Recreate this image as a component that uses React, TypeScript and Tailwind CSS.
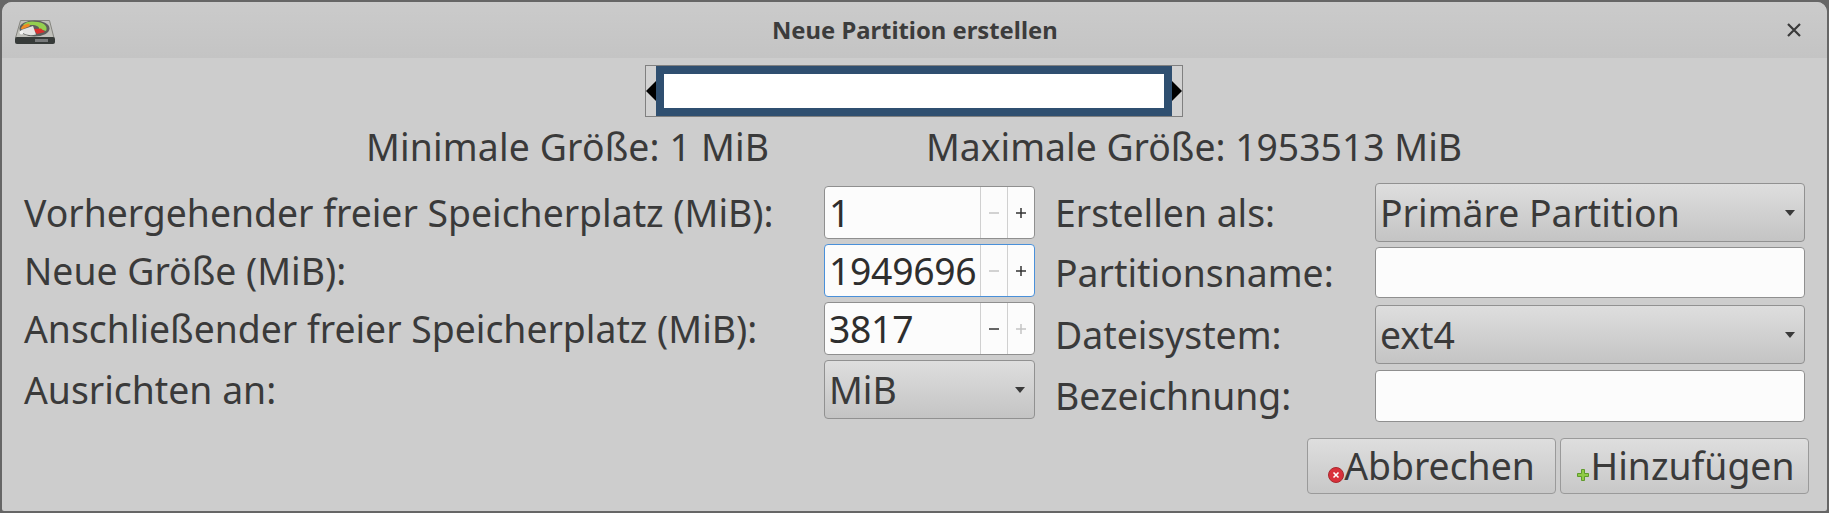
import React from "react";

const font = { fontFamily: '"Noto Sans", sans-serif' };

function Arrow() {
  return (
    <svg width="10" height="6" viewBox="0 0 10 6" className="shrink-0">
      <path d="M0 0H10L5 6Z" fill="#3a3a3a" />
    </svg>
  );
}

function Spin({ value, focus, minusDim, plusDim }: { value: string; focus?: boolean; minusDim?: boolean; plusDim?: boolean }) {
  return (
    <div className={`flex h-[53px] w-[211px] rounded-[4px] border bg-[#fcfcfc] ${focus ? "border-[#4a90d9]" : "border-[#8f8f8f]"}`}>
      <div className="flex-1 overflow-hidden pl-[4px] leading-[51px] tracking-[-0.3px] text-[#2e2e2e]">{value}</div>
      <div className="flex w-[27px] items-center justify-center border-l border-[#d0d0d0]">
        <svg width="10" height="10" viewBox="0 0 10 10"><path d="M0 5H10" stroke={minusDim ? "#c4c4c4" : "#333"} strokeWidth="1.5" /></svg>
      </div>
      <div className="flex w-[27px] items-center justify-center border-l border-[#d0d0d0]">
        <svg width="10" height="10" viewBox="0 0 10 10"><path d="M0 5H10M5 0V10" stroke={plusDim ? "#c4c4c4" : "#333"} strokeWidth="1.5" /></svg>
      </div>
    </div>
  );
}

function Combo({ value, className }: { value: string; className: string }) {
  return (
    <div className={`flex items-center justify-between rounded-[4px] border border-[#919191] bg-gradient-to-b from-[#dedede] to-[#c4c4c4] pl-[4px] pr-[9px] text-[#3a3a3a] ${className}`}>
      <span>{value}</span>
      <Arrow />
    </div>
  );
}

function Entry({ className }: { className: string }) {
  return <div className={`rounded-[4px] border border-[#8f8f8f] bg-[#fcfcfc] ${className}`} />;
}

function DiskIcon() {
  return (
    <svg width="42" height="30" viewBox="0 0 42 30" className="mt-[3px] shrink-0">
      <path d="M6.5 3.5H35.5L40 21H1.5Z" fill="#c0c0ba" stroke="#85857f" strokeWidth="1" />
      <rect x="1" y="20" width="40" height="7" rx="2" fill="#373b39" />
      <rect x="21" y="22" width="13" height="3" fill="#77797a" />
      <ellipse cx="20.5" cy="11.5" rx="15" ry="8" fill="#5d5f5c" />
      <path d="M9 8C12 4 18 4 24 5C31 6 34 10 32 14L25 12C26 10 22 8 18 8C14 8 13 9 12 10Z" fill="#94cf4f" />
      <path d="M7 12C7 9 11 7 15 6.5L16 9L9 12Z" fill="#f08a24" />
      <path d="M19 12L27 11.5L31 15L23 17Z" fill="#d9312e" />
      <path d="M7 13L19 9L22 17.5C16 19 9 18 7 13Z" fill="#e4e4e2" />
      <circle cx="7.5" cy="15.5" r="2" fill="#f2f2f0" />
    </svg>
  );
}

function CancelIcon() {
  return (
    <svg width="16" height="16" viewBox="0 0 16 16" className="block">
      <circle cx="8" cy="8" r="7.5" fill="#d9303b" stroke="#a82a2f" strokeWidth="1" />
      <path d="M5.5 5.5L10.5 10.5M10.5 5.5L5.5 10.5" stroke="#fff" strokeWidth="1.6" />
    </svg>
  );
}

function AddIcon() {
  return (
    <svg width="16" height="12" viewBox="-2 0 16 12" className="block">
      <path d="M4.5 .5H7.5V4.5H11.5V7.5H7.5V11.5H4.5V7.5H.5V4.5H4.5Z" fill="#8fcb45" stroke="#5f9a2c" strokeWidth="1" />
    </svg>
  );
}

function Btn({ icon, label }: { icon: React.ReactNode; label: string }) {
  return (
    <div className="flex h-[56px] w-[249px] items-center justify-center rounded-[4px] border border-[#9a9a9a] bg-gradient-to-b from-[#dedede] to-[#c8c8c8] text-[#3a3a3a]">
      <span className="mt-[18px] shrink-0">{icon}</span>
      <span>{label}</span>
    </div>
  );
}

export default function App() {
  return (
    <div className="h-[513px] w-[1829px] overflow-hidden bg-[#666]" style={font}>
      <div className="flex h-full flex-col overflow-hidden rounded-t-[12px] rounded-b-[4px] border-2 border-[#666] bg-[#cdcdcd] text-[37.33px] leading-[46px] text-[#3a3a3a]">
        <div className="flex h-[56px] shrink-0 items-center bg-gradient-to-b from-[#cbcbcb] to-[#c4c4c4] pl-[12px] pr-[26px]">
          <DiskIcon />
          <span className="ml-[716px] text-[23.8px] font-bold text-[#3c3c3c]">Neue Partition erstellen</span>
          <svg width="14" height="14" viewBox="0 0 14 14" className="ml-auto"><path d="M1 1L13 13M13 1L1 13" stroke="#3a3a3a" strokeWidth="2.2" /></svg>
        </div>

        <div className="ml-[643px] mt-[7px] flex h-[52px] w-[538px] border border-[#808080]">
          <div className="relative w-[10px] bg-[#d2d2d2]">
            <svg width="10" height="20" viewBox="0 0 10 20" className="absolute left-0 top-[15px]"><path d="M10 0V20L0 10Z" fill="#000" /></svg>
          </div>
          <div className="flex-1 border-[8px] border-[#2f4f70] bg-white" />
          <div className="relative w-[10px] bg-[#d2d2d2]">
            <svg width="10" height="20" viewBox="0 0 10 20" className="absolute left-0 top-[15px]"><path d="M0 0V20L10 10Z" fill="#000" /></svg>
          </div>
        </div>

        <div className="mt-[7px] flex h-[46px] items-center">
          <div className="ml-[364px] w-[560px] tracking-[0.15px]">Minimale Größe: 1 MiB</div>
          <div>Maximale Größe: 1953513 MiB</div>
        </div>

        <div className="flex">
          <div className="ml-[22px] flex w-[1011px] flex-col gap-[5px] pt-[16px]">
            <div className="flex items-center justify-between"><span>Vorhergehender freier Speicherplatz (MiB):</span><Spin value="1" minusDim /></div>
            <div className="flex items-center justify-between"><span>Neue Größe (MiB):</span><Spin value="1949696" focus minusDim /></div>
            <div className="flex items-center justify-between"><span>Anschließender freier Speicherplatz (MiB):</span><Spin value="3817" plusDim /></div>
            <div className="flex items-center justify-between"><span>Ausrichten an:</span><Combo value="MiB" className="h-[59px] w-[211px]" /></div>
          </div>
          <div className="ml-[20px] flex w-[750px] flex-col pt-[13px]">
            <div className="flex items-center justify-between"><span>Erstellen als:</span><Combo value="Primäre Partition" className="h-[59px] w-[430px]" /></div>
            <div className="mt-[5px] flex items-center justify-between"><span>Partitionsname:</span><Entry className="h-[51px] w-[430px]" /></div>
            <div className="mt-[7px] flex items-center justify-between"><span>Dateisystem:</span><Combo value="ext4" className="h-[59px] w-[430px]" /></div>
            <div className="mt-[6px] flex items-center justify-between"><span>Bezeichnung:</span><Entry className="h-[52px] w-[430px]" /></div>
          </div>
        </div>

        <div className="mt-auto mb-[17px] flex justify-end gap-[4px] pr-[18px]">
          <Btn icon={<CancelIcon />} label="Abbrechen" />
          <Btn icon={<AddIcon />} label="Hinzufügen" />
        </div>
      </div>
    </div>
  );
}
